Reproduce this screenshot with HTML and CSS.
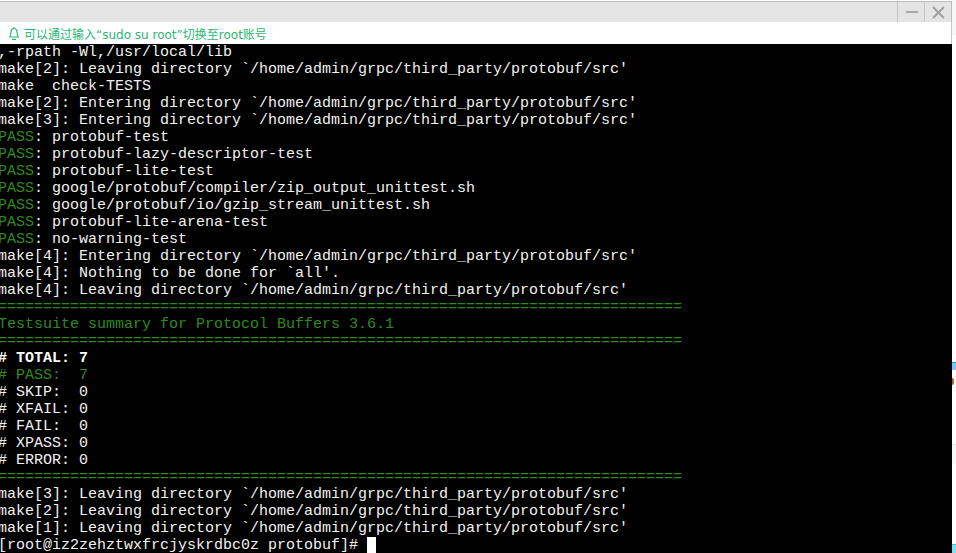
FILE: index.html
```html
<!DOCTYPE html>
<html lang="zh">
<head>
<meta charset="utf-8">
<title>Terminal</title>
<link rel="stylesheet" href="styles.css">
</head>
<body>
<div class="page">
<div class="window">
  <div class="titlebar">
    <div class="winbtn">
      <svg width="14" height="14" viewBox="0 0 14 14"><path d="M2 7h12" stroke="#a8a8a8" stroke-width="2"/></svg>
    </div>
    <div class="winbtn">
      <svg width="14" height="14" viewBox="0 0 14 14"><path d="M2 2l11 11M13 2L2 13" stroke="#a0a0a0" stroke-width="2"/></svg>
    </div>
  </div>
  <div class="notice">
    <svg class="bell" width="10" height="13" viewBox="0 0 10 13"><path d="M.8 10c.9-1 1.100-2 1.100-4.500C1.900 3 3.200 1.500 5 1.500S8.100 3 8.100 5.500c0 2.500.2 3.500 1.100 4.500zM3 12.300h4M5 .3v1.200" fill="none" stroke="#2bb673" stroke-width="1.200"/></svg>
    <span>可以通过输入“sudo su root”切换至root账号</span>
  </div>
  <div class="terminal"><pre class="output">,-rpath -Wl,/usr/local/lib
make[2]: Leaving directory `/home/admin/grpc/third_party/protobuf/src'
make  check-TESTS
make[2]: Entering directory `/home/admin/grpc/third_party/protobuf/src'
make[3]: Entering directory `/home/admin/grpc/third_party/protobuf/src'
<span class="green">PASS</span>: protobuf-test
<span class="green">PASS</span>: protobuf-lazy-descriptor-test
<span class="green">PASS</span>: protobuf-lite-test
<span class="green">PASS</span>: google/protobuf/compiler/zip_output_unittest.sh
<span class="green">PASS</span>: google/protobuf/io/gzip_stream_unittest.sh
<span class="green">PASS</span>: protobuf-lite-arena-test
<span class="green">PASS</span>: no-warning-test
make[4]: Entering directory `/home/admin/grpc/third_party/protobuf/src'
make[4]: Nothing to be done for `all'.
make[4]: Leaving directory `/home/admin/grpc/third_party/protobuf/src'
<span class="green">============================================================================</span>
<span class="green">Testsuite summary for Protocol Buffers 3.6.1</span>
<span class="green">============================================================================</span>
<b># TOTAL: 7</b>
<span class="green"># PASS:  7</span>
# SKIP:  0
# XFAIL: 0
# FAIL:  0
# XPASS: 0
# ERROR: 0
<span class="green">============================================================================</span>
make[3]: Leaving directory `/home/admin/grpc/third_party/protobuf/src'
make[2]: Leaving directory `/home/admin/grpc/third_party/protobuf/src'
make[1]: Leaving directory `/home/admin/grpc/third_party/protobuf/src'
[root@iz2zehztwxfrcjyskrdbc0z protobuf]# <span class="cursor"> </span></pre></div>
</div>
<div class="side">
  <div class="side-grey"></div>
  <div class="side-blue"></div>
  <div class="side-dot"></div>
  <div class="side-panel"></div>
  <div class="side-cyan"></div>
</div>
</div>
</body>
</html>
```
FILE: styles.css
```css
html, body {
  margin: 0;
  padding: 0;
  height: 100%;
  background: #fff;
  overflow: hidden;
}
.page {
  display: flex;
  height: 553px;
}
.window {
  width: 952px;
  height: 553px;
  flex: none;
  display: flex;
  flex-direction: column;
  box-sizing: border-box;
  padding-top: 1px;
}
.titlebar {
  height: 20px;
  background: #e4e4e4;
  border-top: 1px solid #bdbdbd;
  border-right: 1px solid #bdbdbd;
  display: flex;
  justify-content: flex-end;
  flex: none;
}
.winbtn {
  width: 26px;
  border-left: 1px solid #c4c4c4;
  display: flex;
  align-items: center;
  justify-content: center;
}
.notice {
  height: 22px;
  flex: none;
  background: #fff;
  display: flex;
  align-items: center;
  gap: 5px;
  padding-left: 9px;
  font-family: "DejaVu Sans", "Noto Sans CJK SC", sans-serif;
  font-size: 12px;
  color: #2bb673;
  border-right: 1px solid #c8c8c8;
}
.terminal {
  flex: 1;
  background: #000;
  overflow: hidden;
}
.output {
  margin: 0 0 0 -2px;
  color: #f2f2f2;
  font-family: "Liberation Mono", monospace;
  font-size: 15px;
  line-height: 17px;
}
.green { color: #2f8a1e; }
.output b { color: #fff; }
.cursor {
  display: inline-block;
  width: 9px;
  height: 17px;
  background: #fff;
  vertical-align: top;
}
.side {
  flex: 1;
  display: flex;
  flex-direction: column;
}
.side-grey {
  height: 35px;
  background: #f7f7f7;
  margin-bottom: 327px;
}
.side-blue {
  height: 8px;
  background: #7cc4fa;
  border-top: 1px solid #1e90e8;
  box-sizing: border-box;
  margin-bottom: 8px;
}
.side-dot {
  width: 2px;
  height: 7px;
  background: #b5651d;
  border-radius: 0 3px 3px 0;
  margin-bottom: 59px;
}
.side-panel {
  height: 20px;
  background: #f8f8f8;
  border-top: 1px solid #e6e6e6;
  box-sizing: border-box;
  margin-bottom: 80px;
}
.side-cyan {
  height: 9px;
  background: #7be3f2;
  border-top: 1px solid #2ccbe6;
  box-sizing: border-box;
}
```
